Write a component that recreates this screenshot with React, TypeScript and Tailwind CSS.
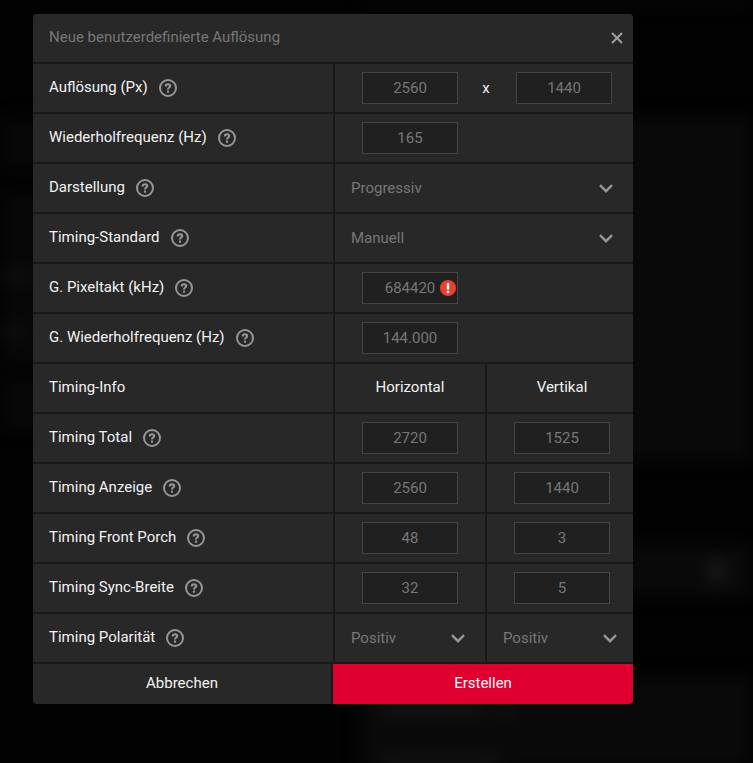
import type { ReactNode } from 'react';

const HelpIcon = () => (
  <svg className="h-[18px] w-[18px] shrink-0" viewBox="0 0 18 18" fill="none" stroke="currentColor" aria-hidden="true">
    <circle cx="9" cy="9" r="8" strokeWidth="2" />
    <path d="M6.8 7.4V6.9C6.8 5.8 7.7 5.2 9 5.2s2.2.7 2.2 1.7c0 1.6-2.2 1.6-2.2 3.5" strokeWidth="2.1" />
    <path d="M9 11.6v2.1" strokeWidth="2.1" />
  </svg>
);

const Chevron = () => (
  <svg className="pointer-events-none absolute right-5 top-5 h-[9px] w-[14px] text-[#969696]" viewBox="0 0 14 9" fill="none" stroke="currentColor" strokeWidth="2.4" aria-hidden="true">
    <path d="M1 1.2l6 6 6-6" />
  </svg>
);

const Cell = ({ children, wide }: { children?: ReactNode; wide?: boolean }) => (
  <div className={wide ? 'col-span-2 flex h-12 items-center bg-[#282828]' : 'flex h-12 items-center overflow-hidden bg-[#282828]'}>
    {children}
  </div>
);

const Label = ({ text, id }: { text: string; id: string }) => (
  <Cell>
    <label htmlFor={id} className="pb-0.5 pl-4 text-[#f2f2f2]">{text}</label>
    <button type="button" aria-label="Hilfe" className="ml-[11px] text-[#969696]">
      <HelpIcon />
    </button>
  </Cell>
);

const NumberBox = ({ id, value, label, error }: { id: string; value: string; label?: string; error?: boolean }) => (
  <div className="relative shrink-0">
    <input
      id={id}
      aria-label={label}
      defaultValue={value}
      className="block h-8 w-24 border border-[#444444] bg-[#202020] text-center text-[#777777] outline-none focus:border-[#777777]"
    />
    {error && (
      <svg className="absolute right-0.5 top-2 h-4 w-4" viewBox="0 0 16 16" aria-hidden="true">
        <circle cx="8" cy="8" r="8" fill="#ea4033" />
        <path d="M8 3v6.4M8 10.8v2.4" stroke="#ffffff" strokeWidth="2.4" />
      </svg>
    )}
  </div>
);

const SelectBox = ({ id, label, options }: { id: string; label?: string; options: string[] }) => (
  <div className="relative w-full min-w-[150px]">
    <select id={id} aria-label={label} className="block h-12 w-full appearance-none bg-[#282828] pl-4 pr-10 text-[#777777] outline-none">
      {options.map((option) => (
        <option key={option}>{option}</option>
      ))}
    </select>
    <Chevron />
  </div>
);

const timings = [
  { id: 'total', text: 'Timing Total', horizontal: '2720', vertical: '1525' },
  { id: 'display', text: 'Timing Anzeige', horizontal: '2560', vertical: '1440' },
  { id: 'porch', text: 'Timing Front Porch', horizontal: '48', vertical: '3' },
  { id: 'sync', text: 'Timing Sync-Breite', horizontal: '32', vertical: '5' },
];

// Dimmed, blurred page behind the dialog
const Backdrop = () => (
  <div className="absolute inset-0 overflow-hidden" aria-hidden="true">
    <div className="grid h-full grid-cols-[360px_1fr] blur-[8px]">
      <div className="flex flex-col pt-[118px]">
        <div className="h-[54px] bg-[#070707]" />
        <div className="mt-5 flex h-[174px] flex-col gap-11 bg-[#070707] pt-[78px]">
          <div className="h-3 w-8 bg-[#0f0f0f]" />
          <div className="h-3 w-6 bg-[#0f0f0f]" />
        </div>
        <div className="mt-3 h-[54px] bg-[#070707]" />
      </div>
      <div className="flex flex-col">
        <div className="h-1.5 bg-[#0a0a0a]" />
        <div className="mt-[110px] h-[346px] bg-[#090909]" />
        <div className="mt-[82px] flex h-[54px] items-center justify-end bg-[#090909] pr-7">
          <div className="h-5 w-4 bg-[#1c1c1c]" />
        </div>
        <div className="mt-[78px] flex-1 bg-[#090909] pl-5 pt-7">
          <div className="flex gap-3">
            <div className="h-3 w-26 bg-[#151515]" />
            <div className="h-3 w-4 bg-[#151515]" />
          </div>
          <div className="mt-10 h-3 w-30 bg-[#151515]" />
        </div>
      </div>
    </div>
  </div>
);

const App = () => {
  return (
    <div className="relative min-h-screen bg-[#020202] pb-8 pl-[33px] pt-[14px] font-['Roboto',sans-serif] text-[15px] leading-5">
      <Backdrop />

      <form role="dialog" aria-labelledby="title" className="relative flex w-full max-w-[600px] flex-col gap-0.5 overflow-hidden rounded bg-[#191919]">
        <div className="flex h-12 items-center justify-between bg-[#282828] pl-4 pr-2.5">
          <h1 id="title" className="pb-0.5 text-[#777777]">Neue benutzerdefinierte Auflösung</h1>
          <button type="button" aria-label="Schließen" className="text-[#a0a0a0]">
            <svg className="h-3 w-3" viewBox="0 0 12 12" fill="none" stroke="currentColor" strokeWidth="2" aria-hidden="true">
              <path d="M1 1l10 10M11 1L1 11" />
            </svg>
          </button>
        </div>

        <div className="grid grid-cols-[1fr_150px_146px] gap-0.5">
          <Label text="Auflösung (Px)" id="width" />
          <Cell wide>
            <div className="flex items-center pl-[27px]">
              <NumberBox id="width" value="2560" />
              <span className="w-[58px] pr-0.5 text-center text-[#f2f2f2]">x</span>
              <NumberBox id="height" value="1440" label="Höhe" />
            </div>
          </Cell>

          <Label text="Wiederholfrequenz (Hz)" id="refresh" />
          <Cell wide>
            <div className="pl-[27px]"><NumberBox id="refresh" value="165" /></div>
          </Cell>

          <Label text="Darstellung" id="scan" />
          <Cell wide><SelectBox id="scan" options={['Progressiv', 'Interlaced']} /></Cell>

          <Label text="Timing-Standard" id="standard" />
          <Cell wide><SelectBox id="standard" options={['Manuell', 'CVT', 'GTF']} /></Cell>

          <Label text="G. Pixeltakt (kHz)" id="clock" />
          <Cell wide>
            <div className="pl-[27px]"><NumberBox id="clock" value="684420" error /></div>
          </Cell>

          <Label text="G. Wiederholfrequenz (Hz)" id="rate" />
          <Cell wide>
            <div className="pl-[27px]"><NumberBox id="rate" value="144.000" /></div>
          </Cell>

          <Cell><span className="pb-0.5 pl-4 text-[#f2f2f2]">Timing-Info</span></Cell>
          <Cell><span className="min-w-[150px] pb-0.5 text-center text-[#f2f2f2]">Horizontal</span></Cell>
          <Cell><span className="min-w-[150px] pb-0.5 text-center text-[#f2f2f2]">Vertikal</span></Cell>

          {timings.map((row) => (
            <div key={row.id} className="contents">
              <Label text={row.text} id={row.id} />
              <Cell>
                <div className="pl-[27px]"><NumberBox id={row.id} value={row.horizontal} /></div>
              </Cell>
              <Cell>
                <div className="pl-[27px]"><NumberBox id={`${row.id}-v`} value={row.vertical} label={`${row.text} vertikal`} /></div>
              </Cell>
            </div>
          ))}

          <Label text="Timing Polarität" id="polarity" />
          <Cell><SelectBox id="polarity" options={['Positiv', 'Negativ']} /></Cell>
          <Cell><SelectBox id="polarity-v" label="Timing Polarität vertikal" options={['Positiv', 'Negativ']} /></Cell>
        </div>

        <div className="grid grid-cols-[1fr_300px] gap-0.5">
          <button type="button" className="h-10 bg-[#282828] pb-0.5 text-[#f2f2f2]">Abbrechen</button>
          <button type="button" className="h-10 bg-[#e0002f] pb-0.5 text-white">Erstellen</button>
        </div>
      </form>
    </div>
  );
};

export default App;
